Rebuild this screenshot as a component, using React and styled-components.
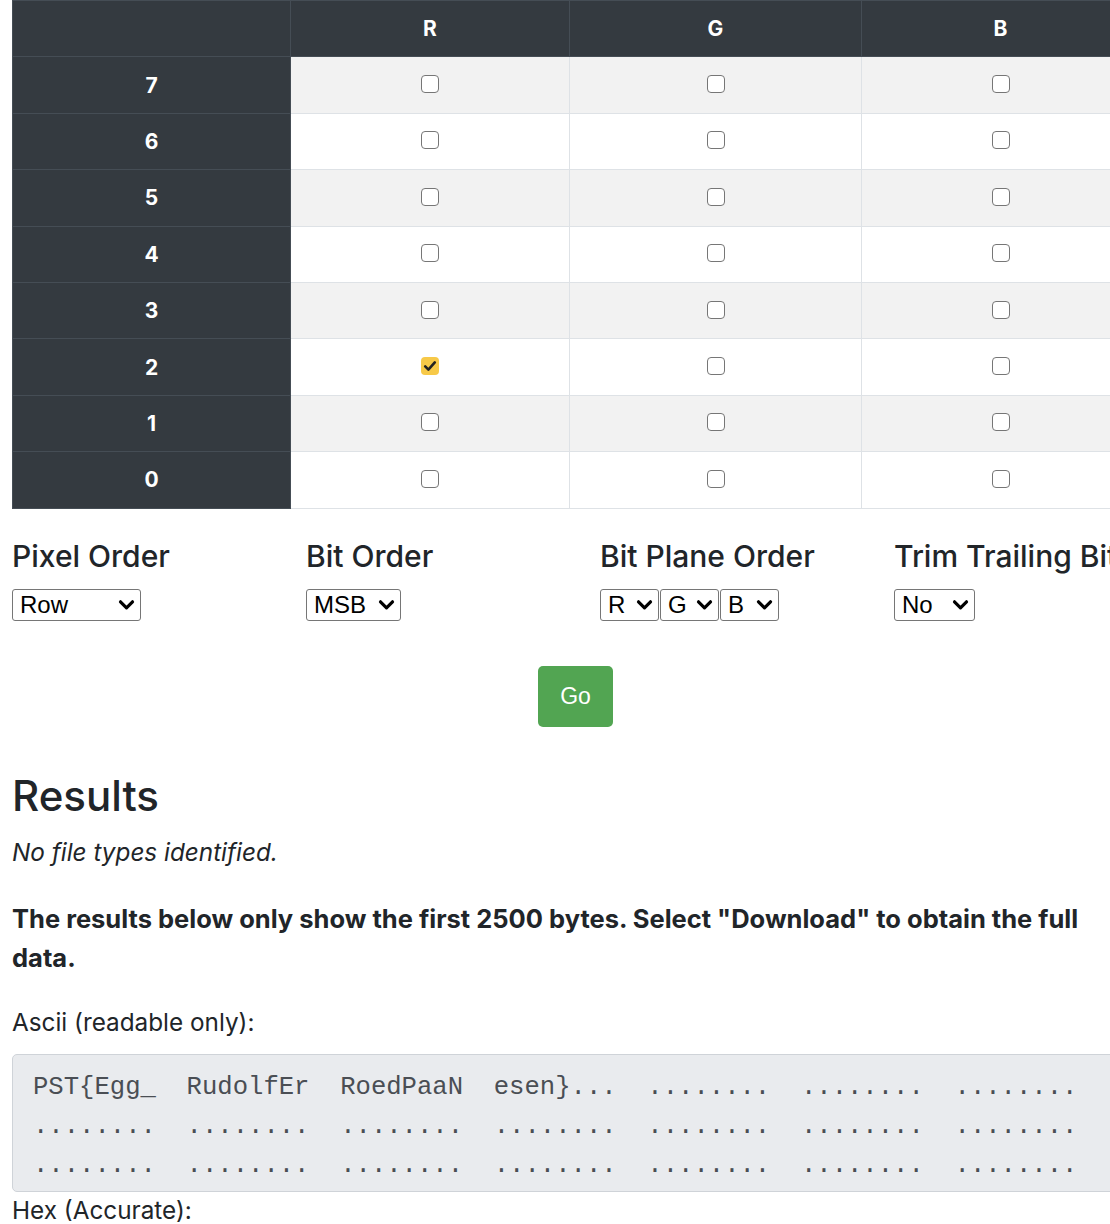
import React from "react";
import styled, { createGlobalStyle } from "styled-components";

const GlobalStyle = createGlobalStyle`
  html, body {
    margin: 0;
    padding: 0;
    overflow: hidden;
    background: #fff;
  }
  body {
    font-family: Inter, "Noto Sans", sans-serif;
    color: #212529;
  }
`;

const Page = styled.div`
  width: 1127px;
  padding-left: 12px;
`;

const Table = styled.table`
  width: 1127px;
  border-collapse: collapse;
  table-layout: fixed;
`;

const Col = styled.col`
  width: ${(p) => p.$w}px;
`;

const HeadCell = styled.th`
  background: #343a40;
  color: #fff;
  border: 1px solid #454d55;
  font-size: 21px;
  font-weight: 700;
  text-align: center;
  padding: 0;
`;

const Row = styled.tr`
  height: 56.4px;
  background: ${(p) => (p.$striped ? "#f2f2f2" : "#fff")};
`;

const HeadRow = styled.tr`
  height: 56.4px;
`;

const Cell = styled.td`
  border: 1px solid #dee2e6;
  text-align: center;
  padding: 0;
  line-height: 0;
`;

const Box = styled.span`
  display: block;
  margin: -2px auto 0;
  box-sizing: border-box;
  width: 18px;
  height: 18px;
  border-radius: 4px;
  border: ${(p) => (p.$checked ? "none" : "1.5px solid #767676")};
  background: ${(p) => (p.$checked ? "#f7c948" : "#fff")};
  color: #222;

  svg {
    display: block;
  }
`;

const Options = styled.div`
  display: grid;
  grid-template-columns: repeat(4, 294px);
  margin-top: 29px;
`;

const OptionTitle = styled.h3`
  font-size: 30px;
  font-weight: 500;
  line-height: 1.2;
  margin: 0 0 15px;
  white-space: nowrap;
`;

const SelectRow = styled.div`
  display: flex;
  gap: 1px;
`;

const SelectWrap = styled.span`
  position: relative;
  display: inline-block;
  width: ${(p) => p.$w}px;
  height: 32px;
`;

const NativeSelect = styled.select`
  appearance: none;
  -webkit-appearance: none;
  box-sizing: border-box;
  width: 100%;
  height: 100%;
  padding: 0 0 0 7px;
  border: 1px solid #767676;
  border-radius: 3px;
  background: #fff;
  color: #000;
  font-family: "Liberation Sans", Arial, sans-serif;
  font-size: 24px;
`;

const Arrow = styled.svg`
  position: absolute;
  right: 6px;
  top: 50%;
  transform: translateY(-50%);
  pointer-events: none;
`;

const GoRow = styled.div`
  display: flex;
  justify-content: center;
  margin-top: 45px;
`;

const GoButton = styled.button`
  width: 75px;
  height: 61px;
  border: none;
  border-radius: 5px;
  background: #52a552;
  color: #fff;
  font-family: "Liberation Sans", Arial, sans-serif;
  font-size: 23px;
`;

const ResultsTitle = styled.h1`
  font-size: 42px;
  font-weight: 500;
  line-height: 1.2;
  margin: 44px 0 15px;
`;

const Note = styled.p`
  font-size: 24.3px;
  line-height: 33px;
  font-style: italic;
  margin: 0 0 30px;
`;

const Warning = styled.p`
  font-size: 25.5px;
  line-height: 39px;
  font-weight: 700;
  margin: 0 0 29px;
`;

const Label = styled.p`
  font-size: 24.3px;
  line-height: 33px;
  margin: ${(p) => p.$top || 0}px 0 ${(p) => p.$gap || 0}px;
`;

const Output = styled.pre`
  box-sizing: border-box;
  width: 1127px;
  margin: 0;
  padding: 13px 20px 6px;
  background: #e9ebee;
  border: 1px solid #cfd3d8;
  border-radius: 5px;
  color: #4a4e54;
  font-family: "Liberation Mono", "Courier New", monospace;
  font-size: 25.6px;
  line-height: 39px;
  white-space: pre;
  overflow: hidden;
`;

const Checkbox = ({ checked }) => (
  <Box $checked={checked}>
    {checked && (
      <svg width="18" height="18" viewBox="0 0 18 18">
        <path
          d="M4.2 9.4 L7.4 12.6 L13.8 5.4"
          fill="none"
          stroke="#222"
          strokeWidth="2.6"
          strokeLinecap="round"
          strokeLinejoin="round"
        />
      </svg>
    )}
  </Box>
);

const Select = ({ w, options }) => (
  <SelectWrap $w={w}>
    <NativeSelect defaultValue={options[0]}>
      {options.map((o) => (
        <option key={o}>{o}</option>
      ))}
    </NativeSelect>
    <Arrow width="17" height="12" viewBox="0 0 17 12">
      <path
        d="M2.5 2.8 L8.5 8.8 L14.5 2.8"
        fill="none"
        stroke="#000"
        strokeWidth="3.2"
        strokeLinecap="round"
        strokeLinejoin="round"
      />
    </Arrow>
  </SelectWrap>
);

const bits = [7, 6, 5, 4, 3, 2, 1, 0];
const dots = "........";
const group = (s) => s + "  ";
const line1 = ["PST{Egg_", "RudolfEr", "RoedPaaN", "esen}...", dots, dots, dots]
  .map(group)
  .join("");
const lineDots = Array(7).fill(dots).map(group).join("");

const App = () => {
  return (
    <Page>
      <GlobalStyle />
      <Table>
        <colgroup>
          <Col $w={278} />
          <Col $w={279} />
          <Col $w={292} />
          <Col $w={278} />
        </colgroup>
        <thead>
          <HeadRow>
            <HeadCell />
            <HeadCell>R</HeadCell>
            <HeadCell>G</HeadCell>
            <HeadCell>B</HeadCell>
          </HeadRow>
        </thead>
        <tbody>
          {bits.map((b, i) => (
            <Row key={b} $striped={i % 2 === 0}>
              <HeadCell>{b}</HeadCell>
              <Cell>
                <Checkbox checked={b === 2} />
              </Cell>
              <Cell>
                <Checkbox />
              </Cell>
              <Cell>
                <Checkbox />
              </Cell>
            </Row>
          ))}
        </tbody>
      </Table>

      <Options>
        <div>
          <OptionTitle>Pixel Order</OptionTitle>
          <Select w={129} options={["Row", "Column"]} />
        </div>
        <div>
          <OptionTitle>Bit Order</OptionTitle>
          <Select w={95} options={["MSB", "LSB"]} />
        </div>
        <div>
          <OptionTitle>Bit Plane Order</OptionTitle>
          <SelectRow>
            <Select w={59} options={["R", "G", "B"]} />
            <Select w={59} options={["G", "R", "B"]} />
            <Select w={59} options={["B", "R", "G"]} />
          </SelectRow>
        </div>
        <div>
          <OptionTitle>Trim Trailing Bits</OptionTitle>
          <Select w={81} options={["No", "Yes"]} />
        </div>
      </Options>

      <GoRow>
        <GoButton>Go</GoButton>
      </GoRow>

      <ResultsTitle>Results</ResultsTitle>
      <Note>No file types identified.</Note>
      <Warning>
        The results below only show the first 2500 bytes. Select "Download" to
        obtain the full data.
      </Warning>
      <Label $gap={15}>Ascii (readable only):</Label>
      <Output>{[line1, lineDots, lineDots].join("\n")}</Output>
      <Label $top={2}>Hex (Accurate):</Label>
    </Page>
  );
};

export default App;
